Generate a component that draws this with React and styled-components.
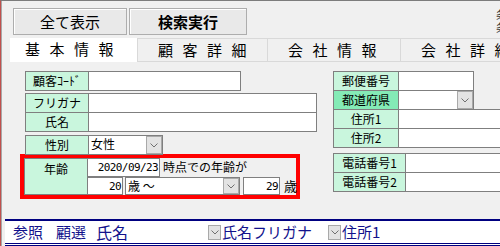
import styled, { createGlobalStyle } from 'styled-components';

const GlobalStyle = createGlobalStyle`
  * { box-sizing: border-box; }
  body {
    margin: 0;
    background: #f0f0f0;
    font-family: "Noto Sans CJK JP", "Noto Sans", sans-serif;
  }
`;

const Screen = styled.div`
  width: 500px;
  height: 246px;
  overflow: hidden;
  background: #f0f0f0;
  border-top: 1px solid #7c7c7c;
  border-left: 1px solid #c0504d;
  box-shadow: inset 1px 0 0 #a8a8a8;
  display: flex;
  flex-direction: column;
  color: #000;
`;

const Toolbar = styled.div`
  display: flex;
  align-items: flex-start;
  gap: 2px;
  padding: 7px 0 0 12px;
  height: 37px;
`;

const Button = styled.button`
  width: ${(p) => p.$w}px;
  height: 27px;
  padding: 0;
  background: #e9e9e9;
  border: 1px solid #adadad;
  box-shadow: inset 1px 1px 0 #fff;
  font-family: inherit;
  font-size: 15px;
  font-weight: ${(p) => (p.$bold ? 700 : 400)};
  line-height: 25px;
  color: #000;
`;

const EdgeText = styled.div`
  margin-left: auto;
  margin-right: -9px;
  width: 13px;
  font-size: 11px;
  line-height: 13px;
  color: #333;
`;

const Tabs = styled.div`
  display: flex;
  height: 24px;
  padding-left: 9px;
`;

const Tab = styled.div`
  flex: none;
  width: ${(p) => p.$w}px;
  height: 24px;
  background: ${(p) => (p.$active ? '#fff' : '#f0f0f0')};
  border: ${(p) => (p.$active ? 'none' : '1px solid #d9d9d9')};
  border-right: none;
  font-size: 15px;
  letter-spacing: 9.5px;
  line-height: 22px;
  white-space: nowrap;
  padding-left: ${(p) => (p.$active ? 15 : 20)}px;
`;

const Content = styled.div`
  display: flex;
  padding-left: 19px;
`;

const LeftCol = styled.div`
  flex: none;
  width: 313px;
  padding-top: 9px;
`;

const RightCol = styled.div`
  padding-top: 9px;
  flex: none;
  width: 200px;
`;

const Block = styled.div`
  margin-left: ${(p) => p.$ml ?? 5}px;
  margin-top: ${(p) => p.$mt ?? 0}px;
  display: flex;
  flex-direction: column;
`;

const Row = styled.div`
  display: flex;
  height: 20px;
  & + & { margin-top: -1px; }
`;

const Label = styled.div`
  flex: none;
  width: ${(p) => p.$w}px;
  background: ${(p) => (p.$strong ? '#84ebb6' : '#c9f6dd')};
  border: 1px solid #7f7f7f;
  font-size: 12px;
  line-height: 18px;
  text-align: center;
`;

const Input = styled.div`
  flex: none;
  width: ${(p) => p.$w}px;
  margin-left: -1px;
  background: #fff;
  border: 1px solid #7f7f7f;
  font-size: 12px;
  line-height: 18px;
  padding: 0 2px;
  text-align: ${(p) => (p.$right ? 'right' : 'left')};
`;

const SelectBox = styled.div`
  flex: none;
  display: flex;
  width: ${(p) => p.$w}px;
  margin-left: ${(p) => p.$ml ?? -1}px;
  background: #fff;
  border: 1px solid #7f7f7f;
  font-size: 12px;
  line-height: 16px;
  padding-left: 2px;
  span { flex: 1; }
`;

const DropButton = styled.div`
  flex: none;
  width: 16px;
  height: 100%;
  background: #e3e3e3;
  border: 1px solid #a9a9a9;
  display: flex;
  align-items: center;
  justify-content: center;
`;

const Chevron = () => (
  <svg width="8" height="5" viewBox="0 0 8 5">
    <polyline points="0.5,0.5 4,4 7.5,0.5" fill="none" stroke="#707070" strokeWidth="1" />
  </svg>
);

const AgeBox = styled.div`
  margin-top: -1px;
  width: 280px;
  height: 45px;
  border: 4px solid #ff0000;
  display: grid;
  grid-template-columns: 64px 1fr;
  grid-template-rows: 19px 18px;
`;

const AgeLabel = styled.div`
  grid-row: 1 / 3;
  background: #c9f6dd;
  border: 1px solid #7f7f7f;
  font-size: 12px;
  line-height: 14px;
  padding-top: 3px;
  text-align: center;
`;

const AgeRow = styled.div`
  display: flex;
  align-items: stretch;
`;

const Plain = styled.span`
  font-size: ${(p) => p.$size ?? 12}px;
  line-height: 18px;
  padding-left: ${(p) => p.$pl ?? 2}px;
`;

const DigitInput = styled(Input)`
  font-family: "DejaVu Sans Mono", monospace;
  font-size: 11px;
  letter-spacing: -0.6px;
  padding-right: 1px;
  margin-left: ${(p) => p.$ml ?? -1}px;
`;

const BottomBar = styled.div`
  margin-top: auto;
  margin-left: 4px;
  height: 27px;
  background: #fff;
  border-top: 2px solid #000080;
  border-bottom: 3px double #000080;
  display: flex;
  align-items: center;
  padding-left: 8px;
  color: #12128c;
`;

const BarCell = styled.div`
  flex: none;
  width: ${(p) => p.$w}px;
  font-size: ${(p) => p.$size ?? 15}px;
  line-height: 20px;
`;

const BarDrop = styled.div`
  flex: none;
  width: 13px;
  height: 15px;
  background: #e3e3e3;
  border: 1px solid #a9a9a9;
  display: flex;
  align-items: center;
  justify-content: center;
  margin-right: 1px;
`;

export default function App() {
  return (
    <>
      <GlobalStyle />
      <Screen>
        <Toolbar>
          <Button $w={114}>全て表示</Button>
          <Button $w={118} $bold>検索実行</Button>
          <EdgeText>条<br />条</EdgeText>
        </Toolbar>
        <Tabs>
          <Tab $w={127} $active>基本情報</Tab>
          <Tab $w={130}>顧客詳細</Tab>
          <Tab $w={133}>会社情報</Tab>
          <Tab $w={150}>会社詳細</Tab>
        </Tabs>
        <Content>
          <LeftCol>
            <Block>
              <Row>
                <Label $w={64}>顧客ｺｰﾄﾞ</Label>
                <Input $w={153} />
              </Row>
            </Block>
            <Block $mt={2}>
              <Row>
                <Label $w={64}>フリガナ</Label>
                <Input $w={229} />
              </Row>
              <Row>
                <Label $w={64}>氏名</Label>
                <Input $w={229} />
              </Row>
            </Block>
            <Block $mt={3}>
              <Row>
                <Label $w={64}>性別</Label>
                <SelectBox $w={75}>
                  <span>女性</span>
                  <DropButton><Chevron /></DropButton>
                </SelectBox>
              </Row>
            </Block>
            <AgeBox>
              <AgeLabel>年齢</AgeLabel>
              <AgeRow>
                <DigitInput $w={73} $right>2020/09/23</DigitInput>
                <Plain $pl={3}>時点での年齢が</Plain>
              </AgeRow>
              <AgeRow>
                <DigitInput $w={36} $right>20</DigitInput>
                <SelectBox $w={115} $ml={2}>
                  <span>歳 〜</span>
                  <DropButton><Chevron /></DropButton>
                </SelectBox>
                <DigitInput $w={37} $ml={3} $right>29</DigitInput>
                <Plain $size={13} $pl={4}>歳</Plain>
              </AgeRow>
            </AgeBox>
          </LeftCol>
          <RightCol>
            <Block $ml={0}>
              <Row>
                <Label $w={66}>郵便番号</Label>
                <Input $w={76} />
              </Row>
              <Row>
                <Label $w={66} $strong>都道府県</Label>
                <SelectBox $w={76}>
                  <span />
                  <DropButton><Chevron /></DropButton>
                </SelectBox>
              </Row>
              <Row>
                <Label $w={66}>住所1</Label>
                <Input $w={110} />
              </Row>
              <Row>
                <Label $w={66}>住所2</Label>
                <Input $w={110} />
              </Row>
            </Block>
            <Block $ml={0} $mt={5}>
              <Row>
                <Label $w={73}>電話番号1</Label>
                <Input $w={110} />
              </Row>
              <Row>
                <Label $w={73}>電話番号2</Label>
                <Input $w={110} />
              </Row>
            </Block>
          </RightCol>
        </Content>
        <BottomBar>
          <BarCell $w={43}>参照</BarCell>
          <BarCell $w={40}>顧選</BarCell>
          <BarCell $w={112} $size={16}>氏名</BarCell>
          <BarDrop><Chevron /></BarDrop>
          <BarCell $w={106}>氏名フリガナ</BarCell>
          <BarDrop><Chevron /></BarDrop>
          <BarCell $w={60}>住所1</BarCell>
        </BottomBar>
      </Screen>
    </>
  );
}
